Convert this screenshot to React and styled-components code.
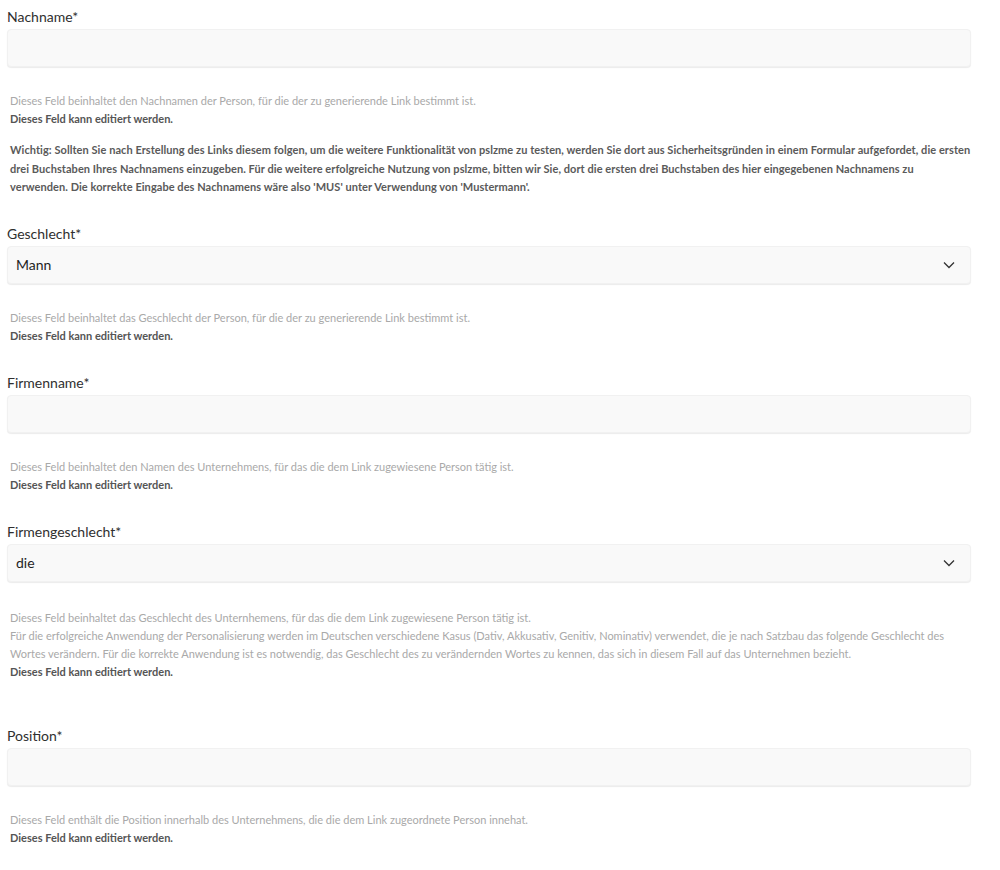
import React from "react";
import styled, { createGlobalStyle } from "styled-components";

const GlobalStyle = createGlobalStyle`
  body {
    margin: 0;
    background: #ffffff;
    font-family: Lato, "Noto Sans", sans-serif;
  }
`;

const Page = styled.div`
  padding: 7px 29px 20px 7px;
`;

const Field = styled.div`
  margin-bottom: ${(p) => (p.$extra ? "45px" : "28px")};
`;

const Label = styled.div`
  font-size: 14px;
  line-height: 20px;
  color: #2f2f2f;
  margin-bottom: 2px;
`;

const InputBox = styled.div`
  height: 38px;
  box-sizing: border-box;
  background: #f9f9f9;
  border: 1px solid #f1f1f1;
  border-radius: 4px;
  box-shadow: 0 1px 1px rgba(0, 0, 0, 0.08);
  display: flex;
  align-items: center;
  justify-content: space-between;
  padding: 0 15px 0 8px;
  font-size: 14px;
  color: #1f1f1f;
`;

const Chevron = () => (
  <svg width="12" height="8" viewBox="0 0 12 8" fill="none">
    <path d="M1 1.5L6 6.5L11 1.5" stroke="#333" strokeWidth="1.3" />
  </svg>
);

const Help = styled.div`
  padding: ${(p) => (p.$long ? "27px" : "25px")} 0 0 3px;
  font-size: 11px;
  line-height: 18px;
`;

const Muted = styled.div`
  color: #a9a9a9;
`;

const Editable = styled.div`
  color: #555555;
  font-weight: 700;
`;

const Notice = styled.p`
  margin: 13px 0 -1px;
  color: #5a5a5a;
  font-weight: 700;
  line-height: 18.5px;
  letter-spacing: 0.06px;
`;

const fields = [
  {
    label: "Nachname*",
    help: [
      "Dieses Feld beinhaltet den Nachnamen der Person, für die der zu generierende Link bestimmt ist.",
    ],
    notice:
      "Wichtig: Sollten Sie nach Erstellung des Links diesem folgen, um die weitere Funktionalität von pslzme zu testen, werden Sie dort aus Sicherheitsgründen in einem Formular aufgefordet, die ersten drei Buchstaben Ihres Nachnamens einzugeben. Für die weitere erfolgreiche Nutzung von pslzme, bitten wir Sie, dort die ersten drei Buchstaben des hier eingegebenen Nachnamens zu verwenden. Die korrekte Eingabe des Nachnamens wäre also 'MUS' unter Verwendung von 'Mustermann'.",
  },
  {
    label: "Geschlecht*",
    value: "Mann",
    select: true,
    help: [
      "Dieses Feld beinhaltet das Geschlecht der Person, für die der zu generierende Link bestimmt ist.",
    ],
  },
  {
    label: "Firmenname*",
    help: [
      "Dieses Feld beinhaltet den Namen des Unternehmens, für das die dem Link zugewiesene Person tätig ist.",
    ],
  },
  {
    label: "Firmengeschlecht*",
    value: "die",
    select: true,
    extra: true,
    help: [
      "Dieses Feld beinhaltet das Geschlecht des Unternhemens, für das die dem Link zugewiesene Person tätig ist.",
      "Für die erfolgreiche Anwendung der Personalisierung werden im Deutschen verschiedene Kasus (Dativ, Akkusativ, Genitiv, Nominativ) verwendet, die je nach Satzbau das folgende Geschlecht des Wortes verändern. Für die korrekte Anwendung ist es notwendig, das Geschlecht des zu verändernden Wortes zu kennen, das sich in diesem Fall auf das Unternehmen bezieht.",
    ],
  },
  {
    label: "Position*",
    help: [
      "Dieses Feld enthält die Position innerhalb des Unternehmens, die die dem Link zugeordnete Person innehat.",
    ],
  },
];

const App = () => {
  return (
    <>
      <GlobalStyle />
      <Page>
        {fields.map((f) => (
          <Field key={f.label} $extra={f.extra}>
            <Label>{f.label}</Label>
            <InputBox>
              <span>{f.value}</span>
              {f.select && <Chevron />}
            </InputBox>
            <Help $long={f.help.length > 1}>
              {f.help.map((h) => (
                <Muted key={h}>{h}</Muted>
              ))}
              <Editable>Dieses Feld kann editiert werden.</Editable>
              {f.notice && <Notice>{f.notice}</Notice>}
            </Help>
          </Field>
        ))}
      </Page>
    </>
  );
};

export default App;
